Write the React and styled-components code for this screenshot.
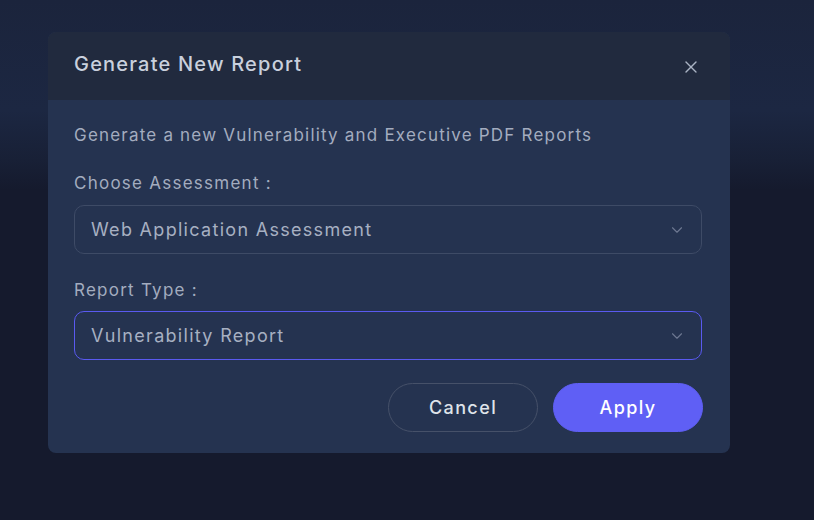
import React from 'react';
import styled, { createGlobalStyle } from 'styled-components';
import { ChevronDown, X } from 'lucide-react';

const GlobalStyle = createGlobalStyle`
  html, body {
    margin: 0;
    padding: 0;
    background: #151a2d;
  }
  body {
    font-family: Inter, "Noto Sans", sans-serif;
  }
`;

const Page = styled.div`
  width: 814px;
  height: 520px;
  box-sizing: border-box;
  padding: 32px 0 0 48px;
  background: linear-gradient(180deg, #1b243c 0px, #1c2742 110px, #182036 160px, #151a2d 190px, #151a2d 100%);
`;

const Modal = styled.div`
  width: 682px;
  border-radius: 8px;
  overflow: hidden;
  background: #253350;
`;

const Header = styled.div`
  height: 68px;
  padding: 0 29px 0 26px;
  display: flex;
  align-items: center;
  justify-content: space-between;
  background: #212a3e;
`;

const Title = styled.h2`
  margin: 0 0 4px;
  font-size: 20px;
  font-weight: 500;
  letter-spacing: 1.2px;
  color: #c9d0dd;
`;

const CloseButton = styled.button`
  display: flex;
  padding: 0;
  border: none;
  background: none;
  color: #aab3c4;
  cursor: pointer;
  margin-top: 2px;
`;

const Body = styled.div`
  padding: 23px 27px 21px 26px;
  display: flex;
  flex-direction: column;
`;

const Description = styled.p`
  margin: 0;
  font-size: 17px;
  line-height: 24px;
  letter-spacing: 1.2px;
  color: #a3acbf;
`;

const Label = styled.label`
  margin-top: 24px;
  font-size: 17px;
  line-height: 24px;
  letter-spacing: 1.25px;
  color: #a3acbf;
`;

const Select = styled.div`
  margin: ${({ $gap }) => $gap}px 1px 0 0;
  height: 49px;
  box-sizing: border-box;
  padding: 0 15px 0 16px;
  display: flex;
  align-items: center;
  justify-content: space-between;
  border-radius: 10px;
  border: 1px solid ${({ $active }) => ($active ? '#5a5af0' : '#3e4b66')};
  color: #a7b0c2;
  font-size: 18px;
  letter-spacing: 1.3px;
  cursor: pointer;
`;

const Chevron = styled(ChevronDown)`
  color: #6d7891;
`;

const Actions = styled.div`
  margin-top: 23px;
  display: flex;
  justify-content: flex-end;
  gap: 15px;
`;

const Button = styled.button`
  width: 150px;
  height: 49px;
  border-radius: 25px;
  font-family: Inter, "Noto Sans", sans-serif;
  font-size: 18px;
  font-weight: 500;
  letter-spacing: 1.4px;
  cursor: pointer;
  border: 1px solid ${({ $primary }) => ($primary ? '#5f5ff5' : '#465169')};
  background: ${({ $primary }) => ($primary ? '#5f5ff5' : 'transparent')};
  color: ${({ $primary }) => ($primary ? '#ffffff' : '#dfe3ea')};
`;

export default function App() {
  return (
    <>
      <GlobalStyle />
      <Page>
        <Modal>
          <Header>
            <Title>Generate New Report</Title>
            <CloseButton aria-label="Close">
              <X size={20} strokeWidth={1.6} />
            </CloseButton>
          </Header>
          <Body>
            <Description>Generate a new Vulnerability and Executive PDF Reports</Description>
            <Label>Choose Assessment :</Label>
            <Select $gap={10}>
              <span>Web Application Assessment</span>
              <Chevron size={18} strokeWidth={1.5} />
            </Select>
            <Label>Report Type :</Label>
            <Select $gap={9} $active>
              <span>Vulnerability Report</span>
              <Chevron size={18} strokeWidth={1.5} />
            </Select>
            <Actions>
              <Button>Cancel</Button>
              <Button $primary>Apply</Button>
            </Actions>
          </Body>
        </Modal>
      </Page>
    </>
  );
}
